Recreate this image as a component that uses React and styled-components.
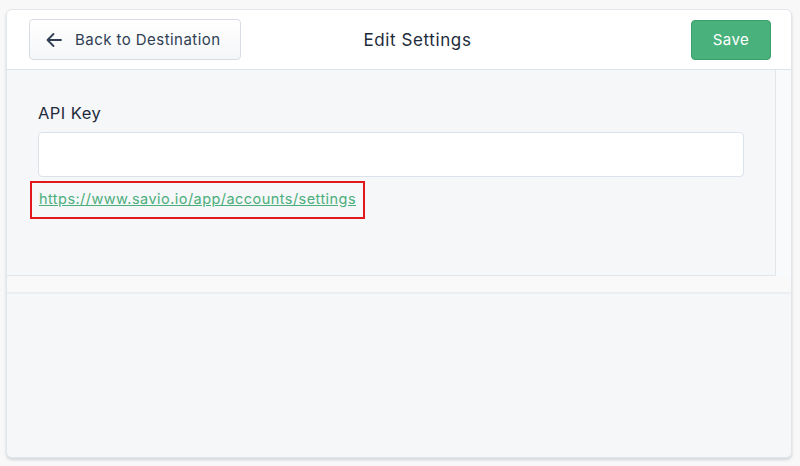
import React from "react";
import styled, { createGlobalStyle } from "styled-components";

const GlobalStyle = createGlobalStyle`
  html, body {
    margin: 0;
    padding: 0;
    background: #f8f8f8;
  }
  body {
    font-family: Inter, "Liberation Sans", Arial, sans-serif;
    letter-spacing: 0.45px;
  }
`;

const Page = styled.div`
  width: 800px;
  height: 466px;
  box-sizing: border-box;
  padding: 9px 8px 8px 6px;
`;

const Card = styled.div`
  height: 449px;
  display: flex;
  flex-direction: column;
  background: #f5f7f9;
  border: 1px solid #e2e5e9;
  border-radius: 6px;
  box-shadow: 0 2px 3px rgba(40, 60, 90, 0.18);
  overflow: hidden;
  box-sizing: border-box;
`;

const Header = styled.div`
  height: 59px;
  flex: none;
  display: flex;
  align-items: center;
  justify-content: space-between;
  padding: 0 20px 0 22px;
  background: #fff;
  border-bottom: 1px solid #dfe3e8;
  position: relative;
`;

const BackButton = styled.button`
  display: flex;
  align-items: center;
  gap: 13px;
  height: 41px;
  width: 212px;
  padding: 0 16px;
  box-sizing: border-box;
  border: 1px solid #d8dde3;
  border-radius: 4px;
  background: linear-gradient(#ffffff, #f5f6f8);
  color: #2f3e52;
  font-family: inherit;
  letter-spacing: inherit;
  font-size: 15px;
  cursor: pointer;
`;

const Title = styled.div`
  position: absolute;
  left: 37px;
  right: 0;
  text-align: center;
  font-size: 17px;
  letter-spacing: 0.6px;
  color: #1d2a3b;
  pointer-events: none;
`;

const SaveButton = styled.button`
  height: 40px;
  width: 80px;
  border: 1px solid #3c9f6b;
  border-radius: 4px;
  background: #49b27c;
  color: #fff;
  font-family: inherit;
  letter-spacing: inherit;
  font-size: 15px;
  cursor: pointer;
`;

const BodyRow = styled.div`
  display: flex;
  height: 206px;
  flex: none;
`;

const Panel = styled.div`
  width: 769px;
  box-sizing: border-box;
  padding: 32px 31px 0 31px;
  border-right: 1px solid #e2e5e9;
  border-bottom: 1px solid #e2e5e9;
  background: #f5f7f9;
`;

const Track = styled.div`
  flex: 1;
  background: #f9fafb;
`;

const Label = styled.div`
  font-size: 16.5px;
  line-height: 20px;
  padding-top: 1px;
  color: #1d2a3b;
  margin-bottom: 9px;
`;

const Input = styled.input`
  display: block;
  width: 100%;
  height: 45px;
  box-sizing: border-box;
  border: 1px solid #dbe2ea;
  border-radius: 4px;
  background: #fff;
  outline: none;
`;

const Highlight = styled.div`
  display: inline-block;
  margin: 4px 0 0 -8px;
  padding: 5px 7px 9px 7px;
  border: 2px solid #e2191c;
`;

const Link = styled.a`
  color: #4cae7b;
  font-size: 14.5px;
  text-decoration: underline;
`;

const Strip = styled.div`
  height: 16px;
  flex: none;
  background: #f9f9fa;
  border-bottom: 2px solid #eceef1;
`;

const Rest = styled.div`
  flex: 1;
  background: #f5f7f9;
`;

const ArrowIcon = () => (
  <svg width="16" height="16" viewBox="0 0 16 16" fill="none">
    <path
      d="M15 8H1.5M7.5 2L1.5 8l6 6"
      stroke="#2f3e52"
      strokeWidth="1.8"
      strokeLinecap="round"
      strokeLinejoin="round"
    />
  </svg>
);

export default function App() {
  return (
    <Page>
      <GlobalStyle />
      <Card>
        <Header>
          <BackButton>
            <ArrowIcon />
            Back to Destination
          </BackButton>
          <Title>Edit Settings</Title>
          <SaveButton>Save</SaveButton>
        </Header>
        <BodyRow>
          <Panel>
            <Label>API Key</Label>
            <Input type="text" />
            <Highlight>
              <Link href="#">https://www.savio.io/app/accounts/settings</Link>
            </Highlight>
          </Panel>
          <Track />
        </BodyRow>
        <Strip />
        <Rest />
      </Card>
    </Page>
  );
}
